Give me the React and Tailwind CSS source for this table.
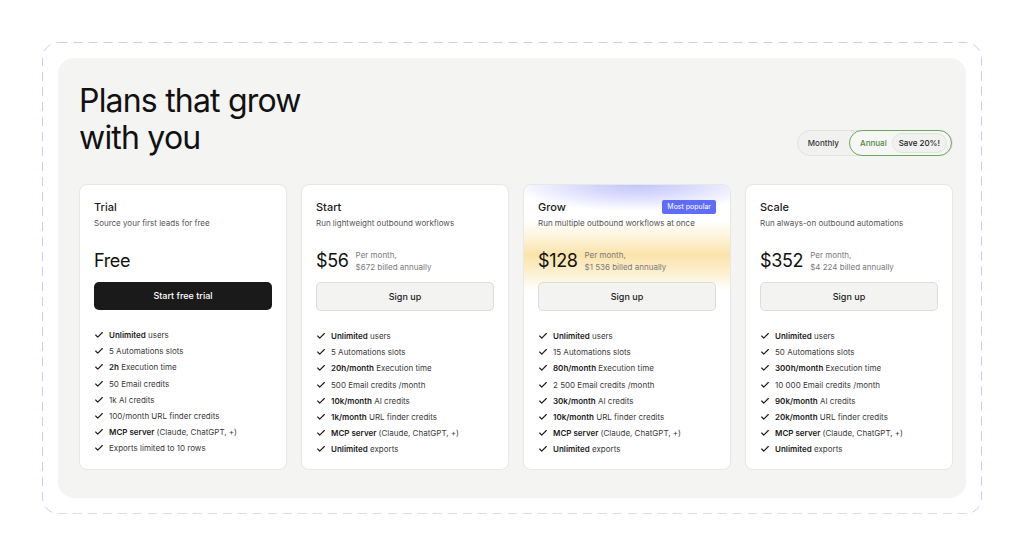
import { Check } from "lucide-react";

const plans = [
  {
    name: "Trial",
    tagline: "Source your first leads for free",
    price: "Free",
    cta: "Start free trial",
    dark: true,
    features: [
      ["Unlimited", " users"],
      ["", "5 Automations slots"],
      ["2h", " Execution time"],
      ["", "50 Email credits"],
      ["", "1k AI credits"],
      ["", "100/month URL finder credits"],
      ["MCP server", " (Claude, ChatGPT, +)"],
      ["", "Exports limited to 10 rows"],
    ],
  },
  {
    name: "Start",
    tagline: "Run lightweight outbound workflows",
    price: "$56",
    billed: "$672 billed annually",
    cta: "Sign up",
    features: [
      ["Unlimited", " users"],
      ["", "5 Automations slots"],
      ["20h/month", " Execution time"],
      ["", "500 Email credits /month"],
      ["10k/month", " AI credits"],
      ["1k/month", " URL finder credits"],
      ["MCP server", " (Claude, ChatGPT, +)"],
      ["Unlimited", " exports"],
    ],
  },
  {
    name: "Grow",
    tagline: "Run multiple outbound workflows at once",
    price: "$128",
    billed: "$1 536 billed annually",
    cta: "Sign up",
    popular: true,
    features: [
      ["Unlimited", " users"],
      ["", "15 Automations slots"],
      ["80h/month", " Execution time"],
      ["", "2 500 Email credits /month"],
      ["30k/month", " AI credits"],
      ["10k/month", " URL finder credits"],
      ["MCP server", " (Claude, ChatGPT, +)"],
      ["Unlimited", " exports"],
    ],
  },
  {
    name: "Scale",
    tagline: "Run always-on outbound automations",
    price: "$352",
    billed: "$4 224 billed annually",
    cta: "Sign up",
    features: [
      ["Unlimited", " users"],
      ["", "50 Automations slots"],
      ["300h/month", " Execution time"],
      ["", "10 000 Email credits /month"],
      ["90k/month", " AI credits"],
      ["20k/month", " URL finder credits"],
      ["MCP server", " (Claude, ChatGPT, +)"],
      ["Unlimited", " exports"],
    ],
  },
];

function PlanCard({ plan }) {
  return (
    <div className="relative overflow-hidden rounded-lg border border-[#e7e7e6] bg-white">
      {plan.popular && (
        <div className="pointer-events-none absolute inset-0 bg-[radial-gradient(ellipse_62%_26px_at_55%_0%,#c3c6ff,#dcdcff_45%,transparent),linear-gradient(to_bottom,transparent_36px,#fdf2d6_54px,#fbe3aa_70px,#fdf0d2_88px,transparent_106px)]" />
      )}
      <div className="relative px-[14px] pt-[15px] pb-[14px]">
        <div className="flex h-[14px] items-center justify-between">
          <span className="text-[11px] font-medium text-[#1b1b1b]">{plan.name}</span>
          {plan.popular && (
            <span className="rounded-[2px] bg-[#5f6cf7] px-[5px] py-[2px] text-[7px] leading-[10px] text-white">
              Most popular
            </span>
          )}
        </div>
        <p className="mt-[3px] text-[8px] leading-[12px] text-[#555]">{plan.tagline}</p>

        <div className="mt-[19px] flex h-[26px] items-center gap-[7px]">
          <span className="text-[18px] leading-none tracking-[-0.02em] text-[#111]">{plan.price}</span>
          {plan.billed && (
            <div className="text-[8px] leading-[12px] text-[#7a7a7a]">
              <div>Per month,</div>
              <div>{plan.billed}</div>
            </div>
          )}
        </div>

        <button
          className={
            plan.dark
              ? "mt-[8px] flex h-[28px] w-full items-center justify-center rounded-[5px] bg-[#1a1a1a] text-[9px] font-medium text-white"
              : "mt-[8px] flex h-[29px] w-full items-center justify-center rounded-[5px] border border-[#dcdcdb] bg-[#f3f3f2] text-[9px] font-medium text-[#1b1b1b]"
          }
        >
          {plan.cta}
        </button>

        <ul className="mt-[19px] flex flex-col gap-[4.2px]">
          {plan.features.map(([bold, rest], i) => (
            <li key={i} className="flex h-[12px] items-center gap-[5px] text-[8px] text-[#3a3a3a]">
              <Check className="h-[10px] w-[10px] text-[#1b1b1b]" strokeWidth={2.75} />
              <span>
                {bold && <span className="font-semibold text-[#1b1b1b]">{bold}</span>}
                {rest}
              </span>
            </li>
          ))}
        </ul>
      </div>
    </div>
  );
}

export default function App() {
  return (
    <div className="min-h-screen bg-white p-[42px] font-['Inter','Liberation_Sans',sans-serif]">
      <div className="relative rounded-[16px] p-[16px]">
        <svg className="pointer-events-none absolute inset-0 h-full w-full" preserveAspectRatio="none">
          <rect
            x="0.5"
            y="0.5"
            width="calc(100% - 1px)"
            height="calc(100% - 1px)"
            rx="16"
            fill="none"
            stroke="#d2c8fb"
            strokeWidth="1"
            strokeDasharray="9 6"
          />
        </svg>
        <div className="rounded-[16px] bg-[#f4f4f3] pl-[21px] pr-[13px] pt-[24px] pb-[28px]">
          <div className="flex items-end justify-between">
            <h1 className="text-[32px] leading-[37px] tracking-[-0.025em] text-[#111]">
              Plans that grow
              <br />
              with you
            </h1>
            <div className="flex h-[26px] items-center rounded-full border border-[#e2e2e1] bg-[#f1f1f0] text-[8px]">
              <span className="px-[10px] font-medium text-[#333]">Monthly</span>
              <div className="flex h-[26px] items-center gap-[5px] rounded-full border border-[#6aa85c] bg-[#f6f6f5] pl-[10px] pr-[4px]">
                <span className="font-medium text-[#4b8a3d]">Annual</span>
                <span className="rounded-full border border-[#e3e3e2] bg-[#f1f1f0] px-[6px] py-[3px] font-medium text-[#222]">
                  Save 20%!
                </span>
              </div>
            </div>
          </div>
          <div className="mt-[28px] grid grid-cols-4 gap-[14px]">
            {plans.map((p) => (
              <PlanCard key={p.name} plan={p} />
            ))}
          </div>
        </div>
      </div>
    </div>
  );
}
